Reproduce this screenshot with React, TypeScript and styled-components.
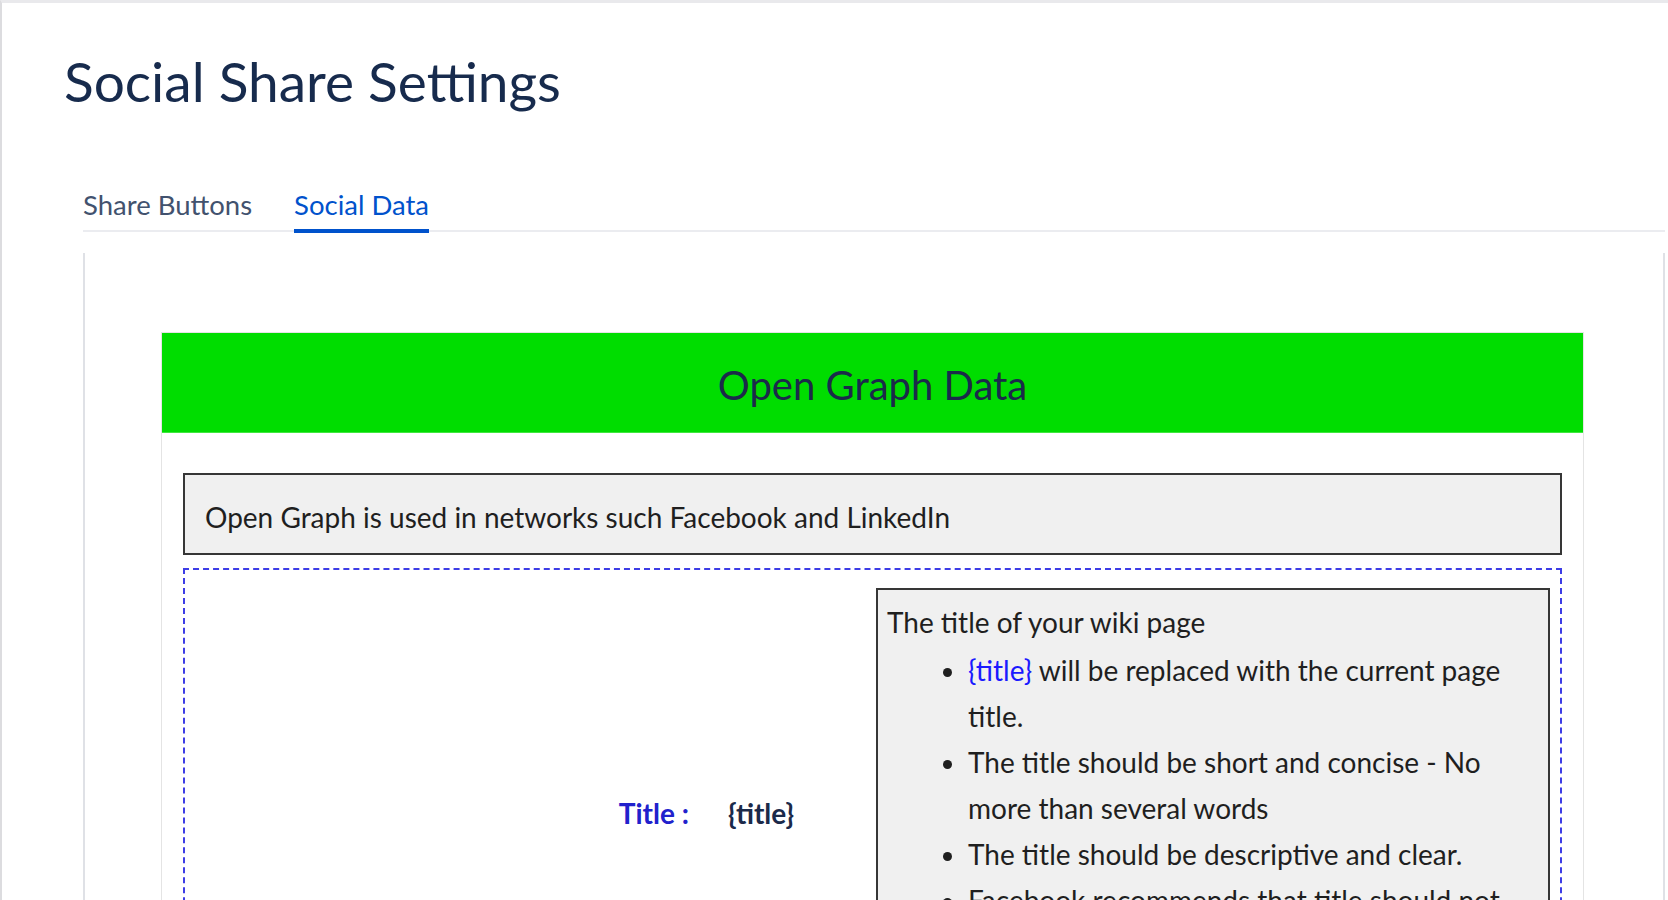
import React from 'react';
import styled, { createGlobalStyle } from 'styled-components';

const GlobalStyle = createGlobalStyle`
  html, body {
    margin: 0;
    padding: 0;
    background: #ffffff;
  }
  body {
    font-family: Lato, "Open Sans", sans-serif;
    color: #1f1f1f;
    overflow: hidden;
  }
  * {
    box-sizing: border-box;
  }
`;

const Page = styled.div`
  min-height: 100vh;
  border-top: 3px solid #e9e9ec;
  border-left: 2px solid #dcdcdf;
`;

const Title = styled.h1`
  margin: 45px 0 0 62px;
  font-size: 55px;
  line-height: 67px;
  font-weight: 400;
  color: #172b4d;
`;

const Main = styled.div`
  margin: 74px 3px 0 81px;
`;

const TabBar = styled.div`
  display: flex;
  gap: 42px;
  border-bottom: 2px solid #ebecf0;
`;

const Tab = styled.div<{ $active?: boolean }>`
  position: relative;
  padding-bottom: 10px;
  font-size: 27.5px;
  line-height: 31px;
  color: ${(p) => (p.$active ? '#0052cc' : '#42526e')};

  &::after {
    content: '';
    display: ${(p) => (p.$active ? 'block' : 'none')};
    position: absolute;
    left: 0;
    right: 0;
    bottom: -3px;
    height: 4px;
    background: #0052cc;
  }
`;

const Panel = styled.div`
  margin-top: 21px;
  border-left: 2px solid #dfe1e6;
  border-right: 2px solid #dfe1e6;
  padding: 79px 79px 0 76px;
  min-height: 700px;
`;

const Card = styled.div`
  border: 1px solid #e4e4e4;
`;

const CardHeader = styled.div`
  height: 100px;
  background: #00dd00;
  border-bottom: 1px solid #3fe83f;
  display: flex;
  align-items: center;
  justify-content: center;
  padding-top: 5px;
`;

const CardTitle = styled.h2`
  margin: 0;
  font-size: 40px;
  line-height: 1;
  font-weight: 400;
  color: #1b2a4a;
`;

const CardBody = styled.div`
  padding: 40px 21px;
`;

const InfoBox = styled.div`
  border: 2px solid #363636;
  background: #f0f0f0;
  padding: 26px 20px 19px;
  font-size: 28px;
  line-height: 33px;
  color: #1f1f1f;
`;

const FieldRow = styled.div`
  margin-top: 13px;
  border: 2px dashed #3d3de6;
  display: flex;
  align-items: flex-start;
  padding: 18px 10px 0 0;
`;

const FieldLabelCell = styled.div`
  flex: 1;
  display: flex;
  justify-content: flex-end;
  gap: 39px;
  padding: 203px 82px 0 0;
  font-size: 28px;
  line-height: 45px;
  font-weight: 700;
`;

const Label = styled.span`
  color: #2121cc;
`;

const Value = styled.span`
  color: #1b2a4a;
`;

const HelpBox = styled.div`
  width: 674px;
  border: 2px solid #363636;
  background: #f0f0f0;
  padding: 9px 9px 20px;
  font-size: 28px;
  line-height: 46px;
  color: #1f1f1f;
`;

const HelpIntro = styled.p`
  margin: 0;
`;

const HelpList = styled.ul`
  margin: 2px 0 0;
  padding-left: 81px;
  list-style: disc;
`;

const Token = styled.span`
  color: #1a1aff;
`;

const App: React.FC = () => {
  return (
    <>
      <GlobalStyle />
      <Page>
        <Title>Social Share Settings</Title>
        <Main>
          <TabBar>
            <Tab>Share Buttons</Tab>
            <Tab $active>Social Data</Tab>
          </TabBar>
          <Panel>
            <Card>
              <CardHeader>
                <CardTitle>Open Graph Data</CardTitle>
              </CardHeader>
              <CardBody>
                <InfoBox>Open Graph is used in networks such Facebook and LinkedIn</InfoBox>
                <FieldRow>
                  <FieldLabelCell>
                    <Label>Title :</Label>
                    <Value>{'{title}'}</Value>
                  </FieldLabelCell>
                  <HelpBox>
                    <HelpIntro>The title of your wiki page</HelpIntro>
                    <HelpList>
                      <li>
                        <Token>{'{title}'}</Token> will be replaced with the current page title.
                      </li>
                      <li>The title should be short and concise - No more than several words</li>
                      <li>The title should be descriptive and clear.</li>
                      <li>Facebook recommends that title should not exceed 95 characters.</li>
                    </HelpList>
                  </HelpBox>
                </FieldRow>
              </CardBody>
            </Card>
          </Panel>
        </Main>
      </Page>
    </>
  );
};

export default App;
